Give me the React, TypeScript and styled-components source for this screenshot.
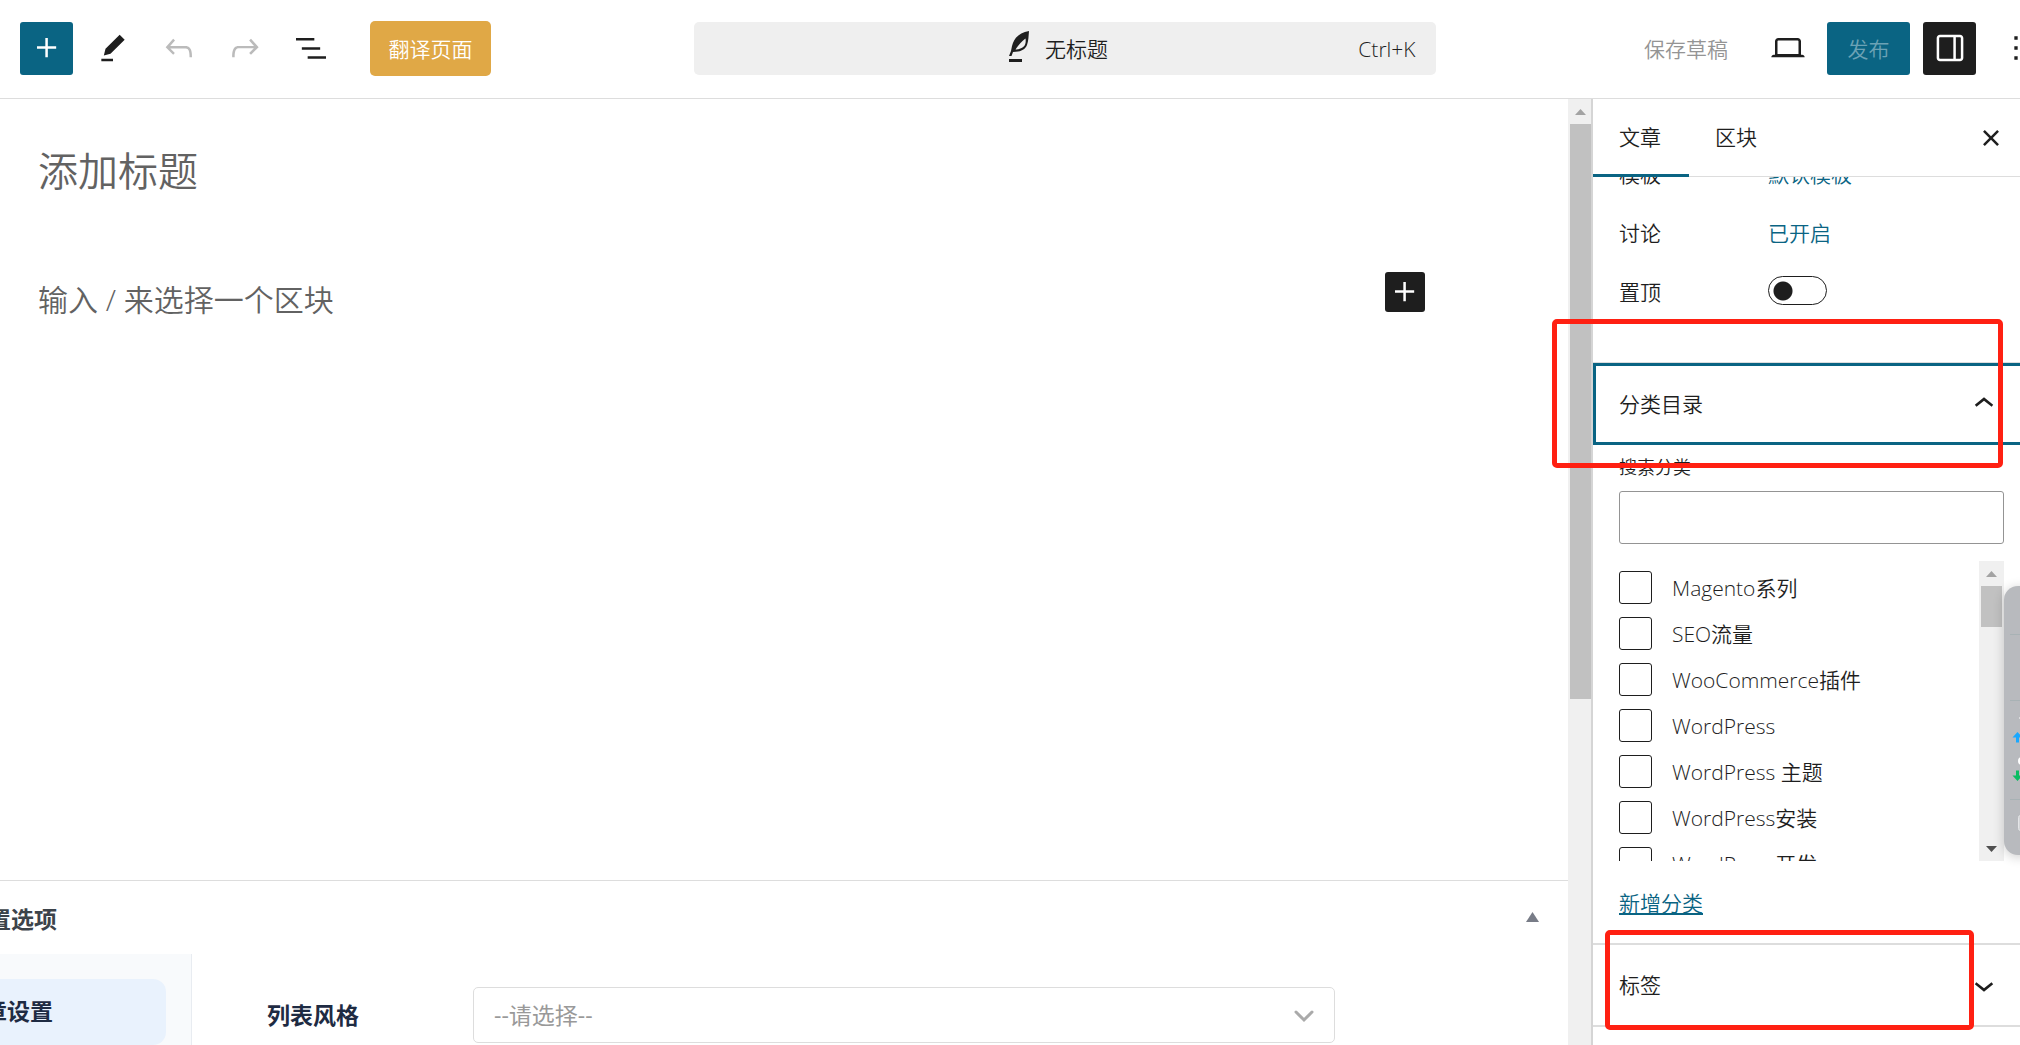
import React from "react";
import styled, { createGlobalStyle, css } from "styled-components";

const Global = createGlobalStyle`
  *, *::before, *::after { box-sizing: border-box; }
  html, body { margin: 0; overflow: hidden; }
  body, button, input, select {
    font-family: "Open Sans", "Noto Sans CJK SC", sans-serif;
    font-size: 21px;
    font-weight: 350;
    line-height: 30px;
    color: #1e1e1e;
  }
  button { border: 0; padding: 0; background: none; }
`;

const Page = styled.div`
  display: flex;
  flex-direction: column;
  height: 100vh;
  overflow: hidden;
  background: #fff;
`;

const Header = styled.header`
  display: flex;
  align-items: center;
  flex: none;
  height: 99px;
  padding: 0 0 2px 20px;
  border-bottom: 1px solid #ddd;
`;

const IconButton = styled.button<{ $tone?: "primary" | "dark" | "muted" }>`
  display: flex;
  align-items: center;
  justify-content: center;
  flex: none;
  width: 53px;
  height: 53px;
  border-radius: 3px;
  color: #1e1e1e;
  ${(p) => p.$tone === "primary" && css`background: #0a6483; color: #fff;`}
  ${(p) => p.$tone === "dark" && css`background: #1e1e1e; color: #fff;`}
  ${(p) => p.$tone === "muted" && css`color: #bbb;`}
`;

const Tools = styled.div`
  display: flex;
  align-items: center;
  gap: 13px;
`;

const TranslateButton = styled.button`
  flex: none;
  width: 121px;
  height: 55px;
  margin-left: 33px;
  padding-top: 2px;
  border-radius: 5px;
  background: #e0a846;
  color: #fff;
`;

const CommandBar = styled.button`
  display: grid;
  grid-template-columns: 1fr auto 1fr;
  align-items: center;
  width: 742px;
  height: 53px;
  margin: 0 auto;
  padding: 0 20px;
  border-radius: 5px;
  background: #efefef;
`;

const DocName = styled.span`
  display: flex;
  align-items: center;
  grid-column: 2;
  gap: 6px;
  padding: 2px 22px 0 0;
`;

const Shortcut = styled.span`
  justify-self: end;
  padding-top: 2px;
`;

const Actions = styled.div`
  display: flex;
  align-items: center;
  flex: none;
  gap: 13px;
  margin-right: -22px;
`;

const DraftButton = styled.button`
  padding: 2px 20px 0 6px;
  color: #949494;
`;

const PublishButton = styled.button`
  width: 83px;
  height: 53px;
  padding-top: 2px;
  border-radius: 3px;
  background: #0a6483;
  color: #6ca2b5;
`;

const Body = styled.div`
  display: flex;
  flex: 1;
  min-height: 0;
`;

const Main = styled.main`
  display: flex;
  flex-direction: column;
  flex: 1;
  min-width: 0;
  overflow: hidden;
`;

const Canvas = styled.section`
  flex: 1;
  padding: 40px 143px 0 38px;
`;

const PostTitle = styled.h1`
  margin: 0;
  font-size: 40px;
  font-weight: 350;
  line-height: 64px;
  color: #626262;
`;

const BlockRow = styled.div`
  display: flex;
  align-items: flex-start;
  justify-content: space-between;
  margin-top: 69px;
`;

const BlockPrompt = styled.p`
  margin: 0;
  padding-top: 8px;
  font-size: 30px;
  line-height: 40px;
  color: #626262;
`;

const InsertButton = styled(IconButton)`
  width: 40px;
  height: 40px;
`;

const MetaBox = styled.section`
  flex: none;
  height: 165px;
  border-top: 1px solid #ddd;
  overflow: hidden;
`;

const MetaHeader = styled.div`
  display: flex;
  align-items: center;
  justify-content: space-between;
  height: 73px;
  padding: 2px 29px 0 0;
`;

const MetaTitle = styled.h2`
  margin: 0 0 0 -12px;
  font-size: 23px;
  font-weight: 700;
  color: #3c434a;
`;

const Collapse = styled.svg`
  margin-bottom: 4px;
`;

const MetaBody = styled.div`
  display: flex;
  height: 100px;
`;

const MetaNav = styled.nav`
  flex: none;
  width: 192px;
  padding: 25px 25px 0 0;
  border-right: 1px solid #e8ecf1;
  background: #f8fafc;
`;

const MetaTab = styled.button`
  display: flex;
  align-items: center;
  width: 100%;
  height: 66px;
  padding-bottom: 3px;
  border-radius: 0 13px 13px 0;
  background: #e9f2fd;
  font-size: 23px;
  font-weight: 700;
  color: #1e2b43;
`;

const Clipped = styled.span`
  margin-left: -16px;
`;

const MetaField = styled.div`
  display: flex;
  align-items: center;
  flex: 1;
  height: 56px;
  margin-top: 33px;
  padding: 0 233px 0 75px;
`;

const FieldLabel = styled.label`
  flex: none;
  width: 206px;
  font-size: 23px;
  font-weight: 700;
  color: #1e2b43;
`;

const SelectWrap = styled.div`
  position: relative;
  flex: 1;
`;

const Select = styled.select`
  appearance: none;
  width: 100%;
  height: 56px;
  padding: 0 20px;
  border: 1px solid #ddd;
  border-radius: 5px;
  background: #fff;
  font-size: 23px;
  font-weight: 400;
  color: #999;
`;

const SelectArrow = styled.svg`
  position: absolute;
  top: 22px;
  right: 21px;
  pointer-events: none;
`;

const Track = styled.div<{ $inset?: boolean }>`
  display: flex;
  flex-direction: column;
  align-items: center;
  justify-content: space-between;
  flex: none;
  width: ${(p) => (p.$inset ? 25 : 23)}px;
  padding-left: ${(p) => (p.$inset ? 0 : 2)}px;
  background: #f0f0f0;
`;

const Cap = styled.div`
  display: flex;
  align-items: center;
  justify-content: center;
  flex: none;
  height: 25px;
`;

const Thumb = styled.div<{ $size: number }>`
  flex: none;
  width: 21px;
  height: ${(p) => p.$size}px;
  margin-bottom: auto;
  background: #c1c1c1;
`;

const Sidebar = styled.aside`
  position: relative;
  display: flex;
  flex-direction: column;
  flex: none;
  width: 429px;
  border-left: 2px solid #d5d5d5;
`;

const Tabs = styled.div`
  display: flex;
  align-items: center;
  justify-content: space-between;
  flex: none;
  height: 78px;
  padding-right: 9px;
  border-bottom: 1px solid #ddd;
`;

const TabList = styled.div`
  display: flex;
  align-self: stretch;
`;

const Tab = styled.button<{ $active?: boolean }>`
  width: 96px;
  height: 78px;
  padding: 0 0 0 26px;
  border-bottom: 3px solid ${(p) => (p.$active ? "#0a6483" : "transparent")};
  text-align: left;
`;

const Scroll = styled.div`
  flex: 1;
  min-height: 0;
  overflow: hidden;
`;

const Summary = styled.div`
  display: grid;
  grid-template-columns: 149px 1fr;
  grid-auto-rows: 30px;
  row-gap: 29px;
  height: 203px;
  margin-top: -18px;
  padding-left: 26px;
`;

const ValueButton = styled.button`
  justify-self: start;
  color: #0a6483;
`;

const Toggle = styled.input`
  appearance: none;
  width: 59px;
  height: 29px;
  margin: -1px 0 0;
  border: 1px solid #1e1e1e;
  border-radius: 15px;
  background: radial-gradient(circle at 14px 14px, #1e1e1e 9px, transparent 10px);
`;

const Panel = styled.section`
  border-top: 1px solid #ddd;
`;

const TagPanel = styled.section`
  border-top: 2px solid #ddd;
  border-bottom: 2px solid #ddd;
`;

const PanelButton = styled.button<{ $focused?: boolean }>`
  display: flex;
  align-items: center;
  justify-content: space-between;
  width: 100%;
  height: ${(p) => (p.$focused ? 82 : 80)}px;
  padding: 0 16px 0 26px;
  ${(p) => p.$focused && css`box-shadow: inset 3px 3px #0a6483, inset 0 -3px #0a6483;`}
`;

const PanelBody = styled.div`
  padding: 7px 16px 25px 26px;
`;

const SearchLabel = styled.label`
  display: block;
  font-size: 18px;
`;

const SearchInput = styled.input`
  display: block;
  width: 100%;
  height: 53px;
  margin: 9px 0 17px;
  padding: 0 12px;
  border: 1px solid #949494;
  border-radius: 3px;
`;

const TermBox = styled.div`
  display: flex;
  height: 300px;
  margin-bottom: 27px;
  overflow: hidden;
`;

const Terms = styled.div`
  display: flex;
  flex-direction: column;
  flex: 1;
  gap: 13px;
  padding-top: 10px;
`;

const Term = styled.label`
  display: flex;
  align-items: center;
  flex: none;
  gap: 20px;
  height: 33px;
`;

const Check = styled.input`
  appearance: none;
  flex: none;
  width: 33px;
  height: 33px;
  margin: 0;
  border: 1px solid #1e1e1e;
  border-radius: 3px;
`;

const AddTerm = styled.a`
  display: block;
  width: max-content;
  color: #0a6483;
  text-decoration: underline 2px;
  text-underline-offset: 2px;
`;

const Marker = styled.div<{ $x: number; $y: number; $w: number; $h: number }>`
  position: absolute;
  left: ${(p) => p.$x}px;
  top: ${(p) => p.$y}px;
  width: ${(p) => p.$w}px;
  height: ${(p) => p.$h}px;
  border: 5px solid #ff2012;
  border-radius: 5px;
  pointer-events: none;
`;

const Dock = styled.div`
  position: fixed;
  right: -14px;
  top: 586px;
  width: 30px;
  height: 269px;
  border-radius: 14px;
  background: #b8babe;
  box-shadow: 0 2px 12px rgba(0, 0, 0, 0.2);
`;

type IconProps = { d: string; size?: number };
const Icon = ({ d, size = 40 }: IconProps) => (
  <svg width={size} height={size} viewBox="0 0 24 24" fill="currentColor" aria-hidden="true">
    <path d={d} />
  </svg>
);

const icons = {
  plus: "M11 12.5V17.5H12.5V12.5H17.5V11H12.5V6H11V11H6V12.5H11Z",
  edit: "m19 7-3-3-8.5 8.5-1 4 4-1L19 7Zm-7 11.5H5V20h7v-1.5Z",
  undo: "M18.3 11.7c-.6-.6-1.4-.9-2.3-.9H6.7l2.9-3.3-1.1-1-4.5 5L8.5 16l1-1-2.7-2.7H16c.5 0 .9.2 1.3.5 1 1 1 3.4 1 4.5v.3h1.5v-.2c0-1.5 0-4.3-1.5-5.7z",
  redo: "M15.6 6.5l-1.1 1 2.9 3.3H8c-.9 0-1.7.3-2.3.9-1.4 1.5-1.4 4.2-1.4 5.6v.2h1.5v-.3c0-1.1 0-3.5 1-4.5.3-.3.7-.5 1.3-.5h9.2L14.5 15l1.1 1.1 4.6-4.6-4.6-5z",
  list: "M3 6h11v1.5H3V6Zm3.5 5.5h11V13h-11v-1.5ZM21 17H10v1.5h11V17Z",
  desktop: "M20.5 16h-.7V8c0-1.1-.9-2-2-2H6.2c-1.1 0-2 .9-2 2v8h-.7c-.8 0-1.5.7-1.5 1.5h20c0-.8-.7-1.5-1.5-1.5zM5.7 8c0-.3.2-.5.5-.5h11.6c.3 0 .5.2.5.5v7.6H5.7V8z",
  drawer: "M18 4H6c-1.1 0-2 .9-2 2v12c0 1.1.9 2 2 2h12c1.1 0 2-.9 2-2V6c0-1.1-.9-2-2-2zm-4 14.5H6c-.3 0-.5-.2-.5-.5V6c0-.3.2-.5.5-.5h8v13zm4.5-.5c0 .3-.2.5-.5.5h-2.5v-13H18c.3 0 .5.2.5.5v12z",
  more: "M13 19h-2v-2h2v2zm0-6h-2v-2h2v2zm0-6h-2V5h2v2z",
  up: "M6.5 12.4L12 8l5.5 4.4-.9 1.2L12 10l-4.5 3.6-1-1.2z",
  down: "M17.5 11.6L12 16l-5.5-4.4.9-1.2L12 14l4.5-3.6 1 1.2z",
  close: "M12 13.06l3.712 3.713 1.061-1.06L13.061 12l3.712-3.712-1.06-1.06L12 10.938 8.288 7.227l-1.061 1.06L10.939 12l-3.712 3.712 1.06 1.061L12 13.061z",
};

const Quill = () => (
  <svg width="40" height="40" viewBox="0 0 40 40" fill="#1e1e1e" aria-hidden="true">
    <path
      fillRule="evenodd"
      d="M30 2C20 4 15 9 13 17L12 22L10 27H12.500L14 23C21 23 26 21 28 16C29.500 12 29.500 7 30 2ZM26.500 9.500C27.500 16 25 20 16.500 20.500C19 16.500 22.500 12.500 26.500 9.500Z"
    />
    <path d="M10 30h13v3H10z" />
  </svg>
);

const Triangle = ({ down, color }: { down?: boolean; color: string }) => (
  <svg width="11" height="6" viewBox="0 0 11 6" fill={color} aria-hidden="true">
    <path d={down ? "M0 0h11L5.5 6z" : "M0 6h11L5.5 0z"} />
  </svg>
);

const DockMarks = () => (
  <svg width="30" height="269" viewBox="0 0 30 269" aria-hidden="true">
    <path d="M6 48.500h24M6 114.500h24M6 213.500h24" stroke="#a8b2b5" />
    <path d="M13.500 146l5 5.500h-3.500v5h-3v-5H8.500z" fill="#19a8ff" />
    <path d="M13.500 195l5-5.500h-3.500v-5h-3v5H8.500z" fill="#0bbd62" />
    <path d="M15 132h4" stroke="#fff" strokeWidth="1" />
    <circle cx="18" cy="175" r="3" stroke="#fff" strokeWidth="2" fill="none" />
    <rect x="14.500" y="229.500" width="14" height="15" rx="2" fill="#d4d5d8" stroke="#e4e5e7" />
  </svg>
);

const terms = [
  "Magento系列",
  "SEO流量",
  "WooCommerce插件",
  "WordPress",
  "WordPress 主题",
  "WordPress安装",
  "WordPress开发",
];

export default function App() {
  return (
    <Page>
      <Global />
      <Header>
        <Tools>
          <IconButton $tone="primary" aria-label="添加区块"><Icon d={icons.plus} /></IconButton>
          <IconButton aria-label="工具"><Icon d={icons.edit} /></IconButton>
          <IconButton $tone="muted" aria-label="撤销"><Icon d={icons.undo} /></IconButton>
          <IconButton $tone="muted" aria-label="重做"><Icon d={icons.redo} /></IconButton>
          <IconButton aria-label="文档概览"><Icon d={icons.list} /></IconButton>
        </Tools>
        <TranslateButton>翻译页面</TranslateButton>
        <CommandBar>
          <DocName><Quill /><span>无标题</span></DocName>
          <Shortcut>Ctrl+K</Shortcut>
        </CommandBar>
        <Actions>
          <DraftButton>保存草稿</DraftButton>
          <IconButton aria-label="预览"><Icon d={icons.desktop} /></IconButton>
          <PublishButton>发布</PublishButton>
          <IconButton $tone="dark" aria-label="设置"><Icon d={icons.drawer} /></IconButton>
          <IconButton aria-label="选项"><Icon d={icons.more} /></IconButton>
        </Actions>
      </Header>

      <Body>
        <Main>
          <Canvas>
            <PostTitle>添加标题</PostTitle>
            <BlockRow>
              <BlockPrompt>输入 / 来选择一个区块</BlockPrompt>
              <InsertButton $tone="dark" aria-label="添加区块"><Icon d={icons.plus} /></InsertButton>
            </BlockRow>
          </Canvas>
          <MetaBox>
            <MetaHeader>
              <MetaTitle>置选项</MetaTitle>
              <Collapse width="13" height="10" viewBox="0 0 13 10" fill="#787c87" aria-hidden="true">
                <path d="M0 10h13L6.500 0z" />
              </Collapse>
            </MetaHeader>
            <MetaBody>
              <MetaNav><MetaTab><Clipped>章设置</Clipped></MetaTab></MetaNav>
              <MetaField>
                <FieldLabel htmlFor="list-style">列表风格</FieldLabel>
                <SelectWrap>
                  <Select id="list-style"><option>--请选择--</option></Select>
                  <SelectArrow width="20" height="14" viewBox="0 0 20 14" fill="none" stroke="#aaa" strokeWidth="3" strokeLinecap="round">
                    <path d="M2 3l8 8 8-8" />
                  </SelectArrow>
                </SelectWrap>
              </MetaField>
            </MetaBody>
          </MetaBox>
        </Main>
        <Track>
          <Cap><Triangle color="#a3a3a3" /></Cap>
          <Thumb $size={575} />
        </Track>

        <Sidebar>
          <Tabs>
            <TabList>
              <Tab $active>文章</Tab>
              <Tab>区块</Tab>
            </TabList>
            <InsertButton aria-label="关闭"><Icon d={icons.close} /></InsertButton>
          </Tabs>
          <Scroll>
            <Summary>
              <span>模板</span>
              <ValueButton>默认模板</ValueButton>
              <span>讨论</span>
              <ValueButton>已开启</ValueButton>
              <label htmlFor="sticky">置顶</label>
              <Toggle id="sticky" type="checkbox" role="switch" />
            </Summary>
            <Panel>
              <PanelButton $focused>分类目录<Icon d={icons.up} /></PanelButton>
              <PanelBody>
                <SearchLabel htmlFor="term-search">搜索分类</SearchLabel>
                <SearchInput id="term-search" />
                <TermBox>
                  <Terms>
                    {terms.map((name) => (
                      <Term key={name}><Check type="checkbox" />{name}</Term>
                    ))}
                  </Terms>
                  <Track $inset>
                    <Cap><Triangle color="#a3a3a3" /></Cap>
                    <Thumb $size={41} />
                    <Cap><Triangle down color="#505050" /></Cap>
                  </Track>
                </TermBox>
                <AddTerm href="#">新增分类</AddTerm>
              </PanelBody>
            </Panel>
            <TagPanel>
              <PanelButton>标签<Icon d={icons.down} /></PanelButton>
            </TagPanel>
          </Scroll>
          <Marker $x={-41} $y={220} $w={451} $h={149} />
          <Marker $x={12} $y={831} $w={369} $h={100} />
        </Sidebar>
      </Body>

      <Dock aria-hidden="true"><DockMarks /></Dock>
    </Page>
  );
}
